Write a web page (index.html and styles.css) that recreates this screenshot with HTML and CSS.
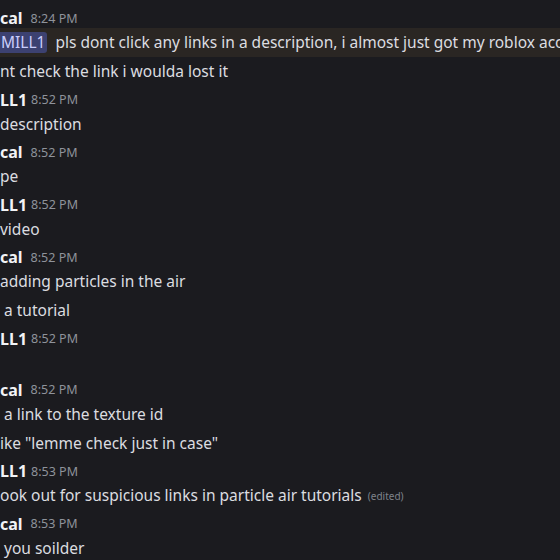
FILE: index.html
```html
<!DOCTYPE html>
<html>
<head>
<meta charset="utf-8">
<link rel="stylesheet" href="styles.css">
</head>
<body>
<main class="chat">
  <section class="group">
    <div class="header"><span class="name">cal</span><span class="time">8:24 PM</span></div>
    <div class="line mentioned"><span class="mention">MILL1</span> pls dont click any links in a description, i almost just got my roblox acco</div>
    <div class="line">nt check the link i woulda lost it</div>
  </section>
  <section class="group">
    <div class="header tight"><span class="name">LL1</span><span class="time">8:52 PM</span></div>
    <div class="line">description</div>
  </section>
  <section class="group">
    <div class="header"><span class="name">cal</span><span class="time">8:52 PM</span></div>
    <div class="line">pe</div>
  </section>
  <section class="group">
    <div class="header tight"><span class="name">LL1</span><span class="time">8:52 PM</span></div>
    <div class="line">video</div>
  </section>
  <section class="group">
    <div class="header"><span class="name">cal</span><span class="time">8:52 PM</span></div>
    <div class="line">adding particles in the air</div>
    <div class="line">&nbsp;a tutorial</div>
  </section>
  <section class="group">
    <div class="header tight"><span class="name">LL1</span><span class="time">8:52 PM</span></div>
    <div class="line blank"></div>
  </section>
  <section class="group">
    <div class="header"><span class="name">cal</span><span class="time">8:52 PM</span></div>
    <div class="line">&nbsp;a link to the texture id</div>
    <div class="line">ike "lemme check just in case"</div>
  </section>
  <section class="group">
    <div class="header tight"><span class="name">LL1</span><span class="time">8:53 PM</span></div>
    <div class="line">ook out for suspicious links in particle air tutorials <span class="edited">(edited)</span></div>
  </section>
  <section class="group">
    <div class="header"><span class="name">cal</span><span class="time">8:53 PM</span></div>
    <div class="line">&nbsp;you soilder</div>
  </section>
</main>
</body>
</html>
```

FILE: styles.css
```css
html, body {
  margin: 0;
  padding: 0;
  background: #1b1b1f;
  width: 560px;
  height: 560px;
  overflow: hidden;
}

.chat {
  display: flex;
  flex-direction: column;
  gap: 4.5px;
  padding-top: 8.5px;
  font-family: "Noto Sans", "Open Sans", sans-serif;
  color: #dcdde0;
  font-size: 15.5px;
}

.group {
  display: flex;
  flex-direction: column;
}

.header {
  height: 19px;
  display: flex;
  align-items: center;
  gap: 8px;
  white-space: nowrap;
}

.header.tight {
  gap: 4px;
}

.name {
  font-weight: 700;
  color: #f2f3f5;
  font-size: 16px;
}

.time {
  color: #8f939b;
  font-size: 12.5px;
}

.line {
  height: 29px;
  display: flex;
  align-items: center;
  white-space: pre;
}

.line.blank {
  height: 27.5px;
}

.mentioned {
  background: #2a2623;
}

.mention {
  background: #3c4171;
  color: #c9cdfb;
  border-radius: 0 3px 3px 0;
  padding: 0 2px 0 1px;
  line-height: 21px;
  margin-right: 4px;
}

.edited {
  font-size: 10px;
  color: #7f838b;
  margin-left: 2px;
  padding-top: 2px;
}
```
